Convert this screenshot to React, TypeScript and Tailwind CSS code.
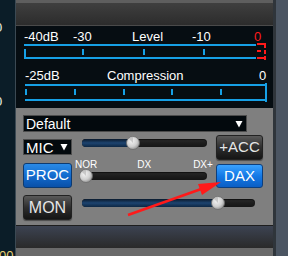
import React from 'react'

const FONT = "font-['Liberation_Sans',Arial,sans-serif]"
const BLUE = '#16a0e6'

function Thumb() {
  return (
    <svg width="14" height="14" viewBox="0 0 14 14" className="block">
      <defs>
        <radialGradient id="tg" cx="0.4" cy="0.35" r="0.7">
          <stop offset="0" stopColor="#f4f4f4" />
          <stop offset="0.6" stopColor="#cfcfcf" />
          <stop offset="1" stopColor="#8e8e8e" />
        </radialGradient>
      </defs>
      <circle cx="7" cy="7" r="6.5" fill="url(#tg)" stroke="#6c6c6c" strokeWidth="0.8" />
      <path d="M7 7 L7 0.8 A6.2 6.2 0 0 0 2.6 2.6 Z" fill="#b8b8b8" opacity="0.7" />
    </svg>
  )
}

function Slider({ width, pos, filled }: { width: number; pos: number; filled: boolean }) {
  return (
    <div className="relative h-[8px]" style={{ width }}>
      <div className="absolute inset-0 rounded-full bg-gradient-to-b from-[#2a2a2a] via-[#1d1d1d] to-[#151515] shadow-[inset_0_1px_1px_rgba(0,0,0,0.6)]" />
      {filled && (
        <div
          className="absolute left-0 top-0 h-[8px] rounded-full bg-gradient-to-b from-[#0b1b2e] via-[#1d4470] to-[#0d2744]"
          style={{ width: pos + 4 }}
        />
      )}
      <div className="absolute top-[-3px]" style={{ left: pos - 7 }}>
        <Thumb />
      </div>
    </div>
  )
}

function DarkButton({ label, size }: { label: string; size: 'md' | 'lg' }) {
  return (
    <div
      className={`h-full w-full rounded-[3px] border border-[#222] bg-gradient-to-b from-[#5a5a5a] via-[#2e2e2e] to-[#151515] flex items-center justify-center text-[#e6e6e6] shadow-[0_1px_1px_rgba(0,0,0,0.4)] ${
        size === 'lg' ? 'text-[16px]' : 'text-[15px]'
      }`}
    >
      {label}
    </div>
  )
}

function BlueButton({ label, bright }: { label: string; bright?: boolean }) {
  return (
    <div
      className={
        bright
          ? 'h-full w-full rounded-[3px] border border-[#0c3f7e] bg-gradient-to-b from-[#3aa2ff] via-[#1479e6] to-[#0b5ec4] flex items-center justify-center text-[15px] text-white'
          : 'h-full w-full rounded-[3px] border border-[#0d3a70] bg-gradient-to-b from-[#2a8ae6] via-[#136ccf] to-[#0a50a8] flex items-center justify-center text-[15px] text-white'
      }
    >
      {label}
    </div>
  )
}

function Meter() {
  const txt = { fontFamily: "'Liberation Sans', Arial, sans-serif", fontSize: 13 }
  return (
    <svg width="257" height="82" viewBox="0 0 257 82" className="block">
      {/* Level scale */}
      <text x="8" y="15" fill="#fff" style={txt}>-40dB</text>
      <text x="57" y="15" fill="#fff" style={txt}>-30</text>
      <text x="116" y="15" fill="#fff" style={txt}>Level</text>
      <text x="176" y="15" fill="#fff" style={txt}>-10</text>
      <text x="238" y="15" fill="#ff1a1a" style={txt}>0</text>
      <rect x="8" y="18" width="232" height="2" fill={BLUE} />
      {[8, 66, 127, 187].map((x) => (
        <rect key={x} x={x} y="23" width="2" height="6" fill={BLUE} />
      ))}
      <rect x="8" y="31" width="232" height="2" fill={BLUE} />
      <rect x="8" y="29" width="2" height="3" fill={BLUE} />
      {/* red peak bracket */}
      <rect x="241" y="17" width="9" height="2" fill="#ff1a1a" />
      <rect x="248" y="17" width="2" height="5" fill="#ff1a1a" />
      <rect x="241" y="24" width="4" height="2" fill="#ff1a1a" />
      <rect x="248" y="24" width="2" height="4" fill="#ff1a1a" />
      <rect x="241" y="31" width="9" height="2" fill="#ff1a1a" />
      <rect x="248" y="30" width="2" height="4" fill="#ff1a1a" />

      {/* Compression scale */}
      <text x="9" y="54" fill="#fff" style={txt}>-25dB</text>
      <text x="91" y="54" fill="#fff" style={txt}>Compression</text>
      <text x="243" y="54" fill="#fff" style={txt}>0</text>
      <rect x="9" y="58" width="241" height="2" fill={BLUE} />
      {[9, 58, 107, 155, 204].map((x) => (
        <rect key={x} x={x} y="63" width="2" height="6" fill={BLUE} />
      ))}
      <rect x="249" y="57" width="2" height="19" fill={BLUE} />
      <rect x="9" y="73" width="241" height="2" fill={BLUE} />
    </svg>
  )
}

function Caret() {
  return (
    <svg width="8" height="8" viewBox="0 0 8 8" className="block">
      <path d="M0.5 1 L7.5 1 L4 7.5 Z" fill="#fff" />
    </svg>
  )
}

export default function App() {
  return (
    <div className={`relative w-[288px] h-[256px] flex overflow-hidden bg-[#0b1d28] ${FONT}`}>
      {/* neighbouring panel (clipped) */}
      <div className="w-[15px] shrink-0 bg-[#0b1d28] overflow-hidden flex flex-col text-[13px] leading-[13px] text-[#f0f0e0]">
        <span className="mt-[21px] -ml-[5px]">0</span>
        <span className="mt-[61px] -ml-[5px]">0</span>
        <span className="mt-[141px] -ml-[1px] text-[#e8d070]">00</span>
      </div>
      <div className="w-[1px] shrink-0 bg-[#3b4953]" />

      {/* main panel */}
      <div className="w-[257px] shrink-0 flex flex-col">
        <div className="h-[3px] bg-[#5e5e5e]" />
        <div className="h-[22px] bg-gradient-to-b from-[#3f3f3f] to-[#2c2c2c]" />
        <div className="h-[1px] bg-[#4a4a4a]" />
        <div className="h-[82px] bg-[#060d12]">
          <Meter />
        </div>

        <div className="h-[117px] bg-[#7f7f7f] pl-[7px] pt-[7px] text-white">
          {/* preset select */}
          <div className="w-[224px] h-[17px] bg-[#03090d] border border-[#4c4c4c] flex items-center pl-[2px] pr-[3px]">
            <span className="flex-1 text-[14px] leading-none">Default</span>
            <Caret />
          </div>

          <div className="flex mt-[3px]">
            <div className="w-[49px] flex flex-col">
              <div className="mt-[4px] h-[16px] bg-[#03090d] border border-[#4c4c4c] flex items-center pl-[2px] pr-[3px]">
                <span className="flex-1 text-[15px] leading-none">MIC</span>
                <Caret />
              </div>
              <div className="mt-[8px] h-[25px]">
                <BlueButton label="PROC" />
              </div>
            </div>

            <div className="w-[139px] ml-[4px] flex flex-col">
              <div className="mt-[4px] ml-[6px]">
                <Slider width={125} pos={51} filled />
              </div>
              <div className="mt-[13px] flex text-[10px] leading-[10px] text-white">
                <span className="ml-[-1px]">NOR</span>
                <span className="ml-[40px]">DX</span>
                <span className="ml-[42px]">DX+</span>
              </div>
              <div className="mt-[2px] ml-[4px]">
                <Slider width={127} pos={6} filled={false} />
              </div>
            </div>

            <div className="w-[47px] ml-[1px] flex flex-col">
              <div className="h-[25px]">
                <DarkButton label="+ACC" size="md" />
              </div>
              <div className="mt-[4px] h-[24px]">
                <BlueButton label="DAX" bright />
              </div>
            </div>
          </div>

          <div className="flex mt-[7px]">
            <div className="w-[49px] h-[25px]">
              <DarkButton label="MON" size="lg" />
            </div>
            <div className="ml-[10px] mt-[4px]">
              <Slider width={173} pos={136} filled />
            </div>
          </div>
        </div>

        <div className="h-[1px] bg-[#1e1e1e]" />
        <div className="h-[22px] bg-gradient-to-b from-[#3c4352] to-[#2a2a2a]" />
        <div className="flex-1 bg-[#6a6a6a]" />
      </div>

      <div className="w-[3px] shrink-0 bg-[#2f353b]" />
      <div className="flex-1 bg-[#4b5562]" />

      {/* annotation arrow */}
      <svg className="absolute inset-0 pointer-events-none" width="288" height="256" viewBox="0 0 288 256">
        <line x1="128" y1="215" x2="204" y2="188" stroke="#ff1a1a" strokeWidth="2.5" />
        <polygon points="221,182 202,195 198,184" fill="#ff1a1a" />
      </svg>
    </div>
  )
}
